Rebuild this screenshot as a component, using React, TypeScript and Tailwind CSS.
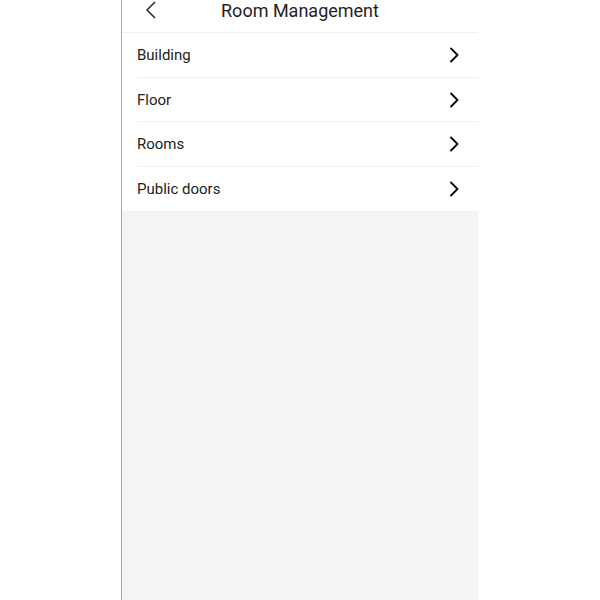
const items = ["Building", "Floor", "Rooms", "Public doors"];

function Chevron() {
  return (
    <svg width="10" height="16" viewBox="0 0 10 16" fill="none">
      <path d="M2 1.5 L8.5 8 L2 14.5" stroke="#111" strokeWidth="2" strokeLinecap="round" strokeLinejoin="round" />
    </svg>
  );
}

function BackArrow() {
  return (
    <svg width="12" height="18" viewBox="0 0 12 18" fill="none">
      <path d="M9.5 1.5 L2 9 L9.5 16.5" stroke="#333" strokeWidth="1.7" strokeLinecap="round" strokeLinejoin="round" />
    </svg>
  );
}

export default function App() {
  return (
    <div className="flex h-[600px] w-full bg-white" style={{ fontFamily: "Roboto, 'Noto Sans', sans-serif" }}>
      <div className="w-[121px] shrink-0 bg-white" />
      <div className="w-px shrink-0 bg-[#a9a9a9]" />
      <div className="flex w-[356px] shrink-0 flex-col bg-[#f4f4f4]">
        <div className="relative flex h-[33px] items-start justify-center border-b border-[#efefef] bg-white">
          <span className="absolute left-[23px] top-[1px]">
            <BackArrow />
          </span>
          <span className="text-[18px] leading-[22px] text-[#1f1f1f]">Room Management</span>
        </div>
        <div className="bg-white">
          {items.map((label, i) => (
            <div
              key={label}
              className={
                i < items.length - 1
                  ? "ml-[15px] flex h-[44.5px] items-center justify-between border-b border-[#f0f0f0] pr-[19px] pt-[1px]"
                  : "ml-[15px] flex h-[44.5px] items-center justify-between pr-[19px] pt-[1px]"
              }
            >
              <span className="text-[15px] text-[#222]">{label}</span>
              <Chevron />
            </div>
          ))}
        </div>
      </div>
      <div className="flex-1 bg-white" />
    </div>
  );
}
